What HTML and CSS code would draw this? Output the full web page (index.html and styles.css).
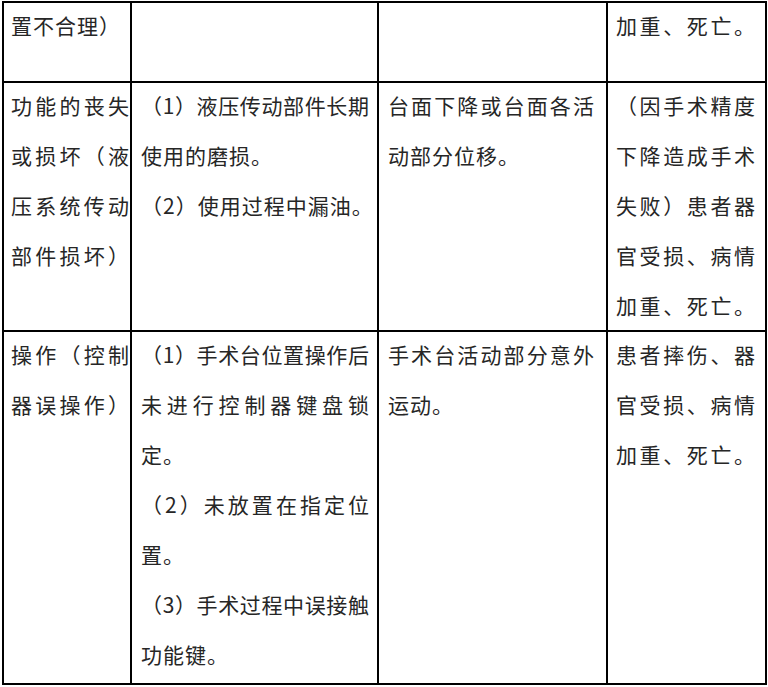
FILE: index.html
```html
<!DOCTYPE html>
<html lang="zh-CN">
<head>
<meta charset="utf-8">
<link rel="stylesheet" href="styles.css">
</head>
<body>
<table class="risk">
  <colgroup>
    <col class="w1"><col class="w2"><col class="w3"><col class="w4">
  </colgroup>
  <tr class="r1">
    <td class="c1"><div class="txt"><span class="ln">置不合理）</span></div></td>
    <td class="c2"></td>
    <td class="c3"></td>
    <td class="c4"><div class="txt"><span class="ln j">加重、死亡。</span></div></td>
  </tr>
  <tr class="r2">
    <td class="c1"><div class="txt">
      <span class="ln j">功能的丧失</span>
      <span class="ln j">或损坏（液</span>
      <span class="ln j">压系统传动</span>
      <span class="ln j">部件损坏）</span>
    </div></td>
    <td class="c2"><div class="txt">
      <span class="ln j">（1）液压传动部件长期</span>
      <span class="ln">使用的磨损。</span>
      <span class="ln">（2）使用过程中漏油。</span>
    </div></td>
    <td class="c3"><div class="txt">
      <span class="ln j">台面下降或台面各活</span>
      <span class="ln">动部分位移。</span>
    </div></td>
    <td class="c4"><div class="txt">
      <span class="ln j">（因手术精度</span>
      <span class="ln j">下降造成手术</span>
      <span class="ln j">失败）患者器</span>
      <span class="ln j">官受损、病情</span>
      <span class="ln j">加重、死亡。</span>
    </div></td>
  </tr>
  <tr class="r3">
    <td class="c1"><div class="txt">
      <span class="ln j">操作（控制</span>
      <span class="ln j">器误操作）</span>
    </div></td>
    <td class="c2"><div class="txt">
      <span class="ln j">（1）手术台位置操作后</span>
      <span class="ln j">未进行控制器键盘锁</span>
      <span class="ln">定。</span>
      <span class="ln j">（2）未放置在指定位</span>
      <span class="ln">置。</span>
      <span class="ln j">（3）手术过程中误接触</span>
      <span class="ln">功能键。</span>
    </div></td>
    <td class="c3"><div class="txt">
      <span class="ln j">手术台活动部分意外</span>
      <span class="ln">运动。</span>
    </div></td>
    <td class="c4"><div class="txt">
      <span class="ln j">患者摔伤、器</span>
      <span class="ln j">官受损、病情</span>
      <span class="ln j">加重、死亡。</span>
    </div></td>
  </tr>
</table>
</body>
</html>
```

FILE: styles.css
```css
html, body {
  margin: 0;
  padding: 0;
  background: #ffffff;
}

body {
  font-family: "Noto Sans CJK SC", "Noto Sans", sans-serif;
  font-size: 21px;
  color: #262626;
}

.risk {
  border-collapse: collapse;
  table-layout: fixed;
  width: 763px;
  margin: 1px 0 0 2px;
}

.w1 { width: 128px; }
.w2 { width: 247px; }
.w3 { width: 229px; }
.w4 { width: 159px; }

.risk td {
  border: 2px solid #000;
  vertical-align: top;
  padding-top: 0;
  padding-bottom: 0;
  line-height: 50px;
}

.r1 td {
  height: 78px;
}

.r3 td {
  padding-bottom: 4px;
}

.c1 { padding-left: 7px; padding-right: 1px; }
.c2 { padding-left: 9px; padding-right: 8px; }
.c3 { padding-left: 9px; padding-right: 12px; }
.c4 { padding-left: 8px; padding-right: 10px; }

.txt {
  margin-top: -3px;
}

.ln {
  display: block;
  white-space: nowrap;
  text-align: left;
  letter-spacing: 1px;
}

.ln.j {
  letter-spacing: 0;
  text-align: justify;
  text-align-last: justify;
  text-justify: inter-character;
}
```
